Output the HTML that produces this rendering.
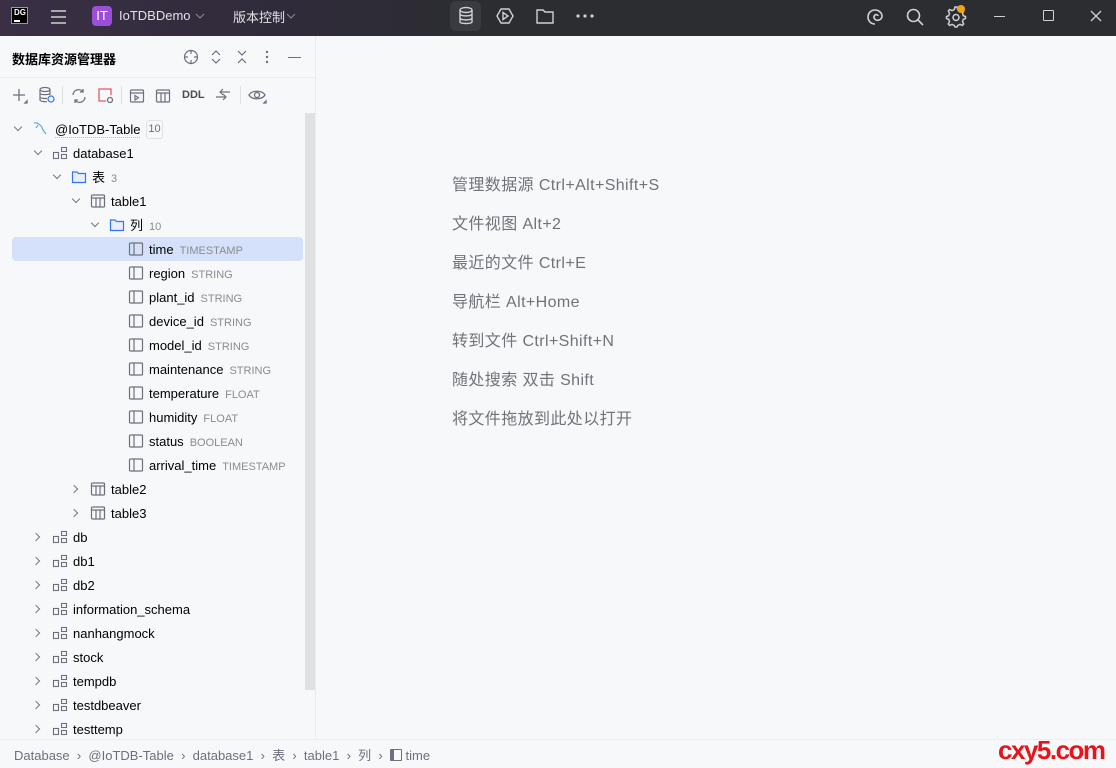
<!DOCTYPE html>
<html><head><meta charset="utf-8"><style>
*{margin:0;padding:0;box-sizing:border-box}
body{width:1116px;height:768px;overflow:hidden;background:#f7f8fa;font-family:"Liberation Sans","Noto Sans CJK SC",sans-serif;position:relative;color:#000}
.top{position:absolute;left:0;top:0;width:1116px;height:36px;background:linear-gradient(90deg,#3a2f45 0%,#302b3a 25%,#2b2d30 45%,#2b2d30 100%)}
.a{position:absolute}
.side{position:absolute;left:0;top:36px;width:316px;height:703px;background:#f7f8fa;border-right:1px solid #ebecf0}
.row{position:absolute;height:24px;line-height:24px;font-size:13px;color:#000;white-space:nowrap}
.row .t{color:#8c8c8c;font-size:11px;margin-left:6px}
.chev{position:absolute;width:6px;height:6px;border-right:1.3px solid #7a7a7a;border-bottom:1.3px solid #7a7a7a}
.down{transform:rotate(45deg)}
.right{transform:rotate(-45deg)}
.hint{position:absolute;left:452px;font-size:16px;color:#6f737a;letter-spacing:0.4px}
svg{position:absolute}
.bc{position:absolute;top:745px;font-size:13px;color:#6c707e}
</style></head><body>
<div class="top"></div>
<div class="a" style="left:11px;top:7px;width:17px;height:17px;background:#000;border:1px solid #21d789;color:#fff;font-size:8px;font-weight:bold;line-height:9px;padding-left:2px">DG<div style="width:6px;height:1.5px;background:#fff;margin-top:3px"></div></div>
<svg style="left:50px;top:9px" width="17" height="16"><path d="M1 2H16M1 8H16M1 14H16" stroke="#ced0d6" stroke-width="1.6"/></svg>
<div class="a" style="left:92px;top:6px;width:20px;height:20px;border-radius:4px;background:#9b4fd9;color:#fff;font-size:13px;line-height:20px;text-align:center">IT</div>
<div class="a" style="left:119px;top:8px;color:#dfe1e5;font-size:13px">IoTDBDemo</div>
<svg style="left:195px;top:13px" width="10" height="6"><path d="M1 1L5 5L9 1" stroke="#8a8d93" fill="none"/></svg>
<div class="a" style="left:233px;top:7px;color:#dfe1e5;font-size:13px">版本控制</div>
<svg style="left:286px;top:13px" width="10" height="6"><path d="M1 1L5 5L9 1" stroke="#8a8d93" fill="none"/></svg>
<div class="a" style="left:450px;top:1px;width:31px;height:30px;border-radius:6px;background:#393b40"></div>
<svg style="left:456px;top:6px" width="20" height="20" fill="none" stroke="#ced0d6" stroke-width="1.4"><ellipse cx="10" cy="4" rx="6" ry="2.5"/><path d="M4 4V16C4 18 16 18 16 16V4M4 8C4 10.5 16 10.5 16 8M4 12C4 14.5 16 14.5 16 12"/></svg>
<svg style="left:495px;top:6px" width="20" height="20" fill="none" stroke="#ced0d6" stroke-width="1.4"><path d="M6 3H14L18 10L14 17H6L2 10Z"/><path d="M8 6.5L13 10L8 13.5Z"/></svg>
<svg style="left:535px;top:7px" width="20" height="18" fill="none" stroke="#ced0d6" stroke-width="1.4"><path d="M2 3H8L10 5H18V16H2Z"/></svg>
<svg style="left:576px;top:14px" width="18" height="4" fill="#ced0d6"><circle cx="2" cy="2" r="1.6"/><circle cx="9" cy="2" r="1.6"/><circle cx="16" cy="2" r="1.6"/></svg>
<svg style="left:865px;top:7px" width="20" height="20" fill="none" stroke="#ced0d6" stroke-width="1.6"><path d="M10 17C5 17 3 13 3 10C3 6 6 3 10 3C14 3 17 6 17 9C17 12 14 14 11 13C9 12 8 10 10 8C11 7 13 8 13 9"/></svg>
<svg style="left:905px;top:7px" width="20" height="20" fill="none" stroke="#ced0d6" stroke-width="1.6"><circle cx="8.5" cy="8.5" r="6"/><path d="M13 13L18 18"/></svg>
<svg style="left:945px;top:6px" width="22" height="22" fill="none" stroke="#ced0d6" stroke-width="1.5"><path d="M10 2L12 2L12.7 4.5L15 5.7L17.3 4.5L18.7 6L17.5 8.3L18.3 10.7L20.5 11.5V13.5L18.3 14.3L17.5 16.7L18.7 19L17.3 20.5L15 19.3L12.7 20.5L12 22H10L9.3 20.5L7 19.3L4.7 20.5L3.3 19L4.5 16.7L3.7 14.3L1.5 13.5V11.5L3.7 10.7L4.5 8.3L3.3 6L4.7 4.5L7 5.7L9.3 4.5Z" transform="translate(0,-1)"/><circle cx="11" cy="11.5" r="3"/></svg>
<div class="a" style="left:957px;top:5px;width:8px;height:8px;border-radius:50%;background:#f2a218"></div>
<div class="a" style="left:994px;top:16px;width:11px;height:1.3px;background:#ced0d6"></div>
<div class="a" style="left:1043px;top:10px;width:11px;height:11px;border:1.3px solid #ced0d6;border-radius:1px"></div>
<svg style="left:1090px;top:10px" width="12" height="12"><path d="M1 1L11 11M11 1L1 11" stroke="#ced0d6" stroke-width="1.3"/></svg>

<div class="side"></div>
<div class="a" style="left:0;top:77px;width:316px;height:1px;background:#ebecf0"></div>
<div class="a" style="left:12px;top:49px;font-size:13px;font-weight:bold;color:#000">数据库资源管理器</div>
<svg style="left:183px;top:49px" width="16" height="16" fill="none" stroke="#6c707e" stroke-width="1.2"><circle cx="8" cy="8" r="6.5"/><path d="M8 1V5M8 11V15M1 8H5M11 8H15"/></svg>
<svg style="left:210px;top:49px" width="12" height="16" fill="none" stroke="#6c707e" stroke-width="1.2"><path d="M2 6L6 2L10 6M2 10L6 14L10 10"/></svg>
<svg style="left:236px;top:49px" width="12" height="16" fill="none" stroke="#6c707e" stroke-width="1.2"><path d="M2 2L6 6L10 2M2 14L6 10L10 14"/></svg>
<svg style="left:265px;top:50px" width="4" height="14" fill="#6c707e"><circle cx="2" cy="2" r="1.2"/><circle cx="2" cy="7" r="1.2"/><circle cx="2" cy="12" r="1.2"/></svg>
<div class="a" style="left:288px;top:57px;width:13px;height:1.2px;background:#6c707e"></div>
<svg style="left:11px;top:87px" width="18" height="18" fill="none" stroke="#6c707e" stroke-width="1.3"><path d="M8 2V14M2 8H14"/><path d="M14 16L16 14V16Z" fill="#6c707e"/></svg>
<svg style="left:38px;top:86px" width="18" height="18" fill="none" stroke="#6c707e" stroke-width="1.2"><ellipse cx="7" cy="3.5" rx="5" ry="2"/><path d="M2 3.5V14C2 15.5 8 16 9 15.5M12 3.5V9M2 7.5C2 9 12 9 12 7.5M2 11C2 12.5 8 12.7 9 12.3"/><circle cx="13" cy="13" r="3" stroke="#3574f0"/></svg>
<div class="a" style="left:62px;top:86px;width:1px;height:18px;background:#dfe1e5"></div>
<svg style="left:70px;top:87px" width="18" height="18" fill="none" stroke="#6c707e" stroke-width="1.3"><path d="M3 8A5.5 5.5 0 0 1 13 5M15 10A5.5 5.5 0 0 1 5 13M13 2V5H10M5 16V13H8"/></svg>
<svg style="left:97px;top:87px" width="18" height="18" fill="none" stroke-width="1.3"><path d="M9 14H2V2H14V8" stroke="#e55765"/><circle cx="13" cy="13" r="2.5" stroke="#6c707e"/></svg>
<div class="a" style="left:121px;top:86px;width:1px;height:18px;background:#dfe1e5"></div>
<svg style="left:129px;top:88px" width="16" height="16" fill="none" stroke="#6c707e" stroke-width="1.2"><rect x="1.5" y="2" width="13" height="12" rx="1"/><path d="M1.5 5H14.5M6 7.5V12L9.5 9.8Z"/></svg>
<svg style="left:155px;top:88px" width="16" height="16" fill="none" stroke="#6c707e" stroke-width="1.2"><rect x="1.5" y="2" width="13" height="12" rx="1"/><path d="M1.5 5H14.5M6 5V14M10 5V14"/></svg>
<div class="a" style="left:182px;top:89px;font-size:11px;font-weight:bold;color:#494b57">DDL</div>
<svg style="left:214px;top:86px" width="18" height="18" fill="none" stroke="#6c707e" stroke-width="1.2"><path d="M2 11H12M9 8L12 11L9 14M16 6H6M9 3L6 6L9 9"/></svg>
<div class="a" style="left:240px;top:86px;width:1px;height:18px;background:#dfe1e5"></div>
<svg style="left:248px;top:87px" width="20" height="18" fill="none" stroke="#6c707e" stroke-width="1.3"><path d="M1 8C4 3 14 3 17 8C14 13 4 13 1 8Z"/><circle cx="9" cy="8" r="2.5"/><path d="M16 16L18 14V16Z" fill="#6c707e"/></svg>
<div class="a" style="left:305px;top:113px;width:10px;height:577px;background:#dfe1e5"></div>
<div class="a" style="left:12px;top:237px;width:291px;height:24px;border-radius:4px;background:#d5e1fb"></div>

<div class="chev down" style="left:15px;top:124px"></div>
<svg style="left:32px;top:120px" width="16" height="16" fill="none" stroke="#4fa3d8" stroke-width="1.1"><path d="M2 3C6 2 10 6 11 10L14 14M6 5L4 8"/></svg>
<div class="row" style="left:55px;top:118px"><span style="border-bottom:1px dotted #e5c33a">@IoTDB-Table</span></div>
<div class="a" style="left:146px;top:120px;width:17px;height:19px;border:1px solid #dfe1e5;border-radius:3px;font-size:11px;color:#6c707e;text-align:center;line-height:17px">10</div>

<div class="chev down" style="left:35px;top:148px"></div>
<svg style="left:52px;top:145px" width="16" height="16" fill="none" stroke="#6c707e" stroke-width="1.1"><rect x="1.5" y="7.5" width="5" height="6"/><rect x="9.5" y="2.5" width="5" height="4"/><rect x="9.5" y="9.5" width="5" height="4"/></svg>
<div class="row" style="left:73px;top:142px">database1</div>

<div class="chev down" style="left:54px;top:172px"></div>
<svg style="left:71px;top:169px" width="16" height="16" fill="none" stroke="#3574f0" stroke-width="1.2"><path d="M1.5 3H6L7.5 4.5H14.5V13.5H1.5Z" fill="#e7effd"/></svg>
<div class="row" style="left:92px;top:166px">表<span class="t">3</span></div>

<div class="chev down" style="left:73px;top:196px"></div>
<svg style="left:90px;top:193px" width="16" height="16" fill="none" stroke="#6c707e" stroke-width="1.2"><rect x="1.5" y="2" width="13" height="12" rx="1"/><path d="M1.5 5H14.5M6 5V14M10 5V14"/></svg>
<div class="row" style="left:111px;top:190px">table1</div>

<div class="chev down" style="left:92px;top:220px"></div>
<svg style="left:109px;top:217px" width="16" height="16" fill="none" stroke="#3574f0" stroke-width="1.2"><path d="M1.5 3H6L7.5 4.5H14.5V13.5H1.5Z" fill="#e7effd"/></svg>
<div class="row" style="left:130px;top:214px">列<span class="t">10</span></div>

<div id="cols"></div>
<script>
var cols=[["time","TIMESTAMP"],["region","STRING"],["plant_id","STRING"],["device_id","STRING"],["model_id","STRING"],["maintenance","STRING"],["temperature","FLOAT"],["humidity","FLOAT"],["status","BOOLEAN"],["arrival_time","TIMESTAMP"]];
var h="";
cols.forEach(function(c,i){var y=237+i*24;
h+='<svg style="left:128px;top:'+(y+4)+'px" width="16" height="16" fill="none" stroke="#6c707e" stroke-width="1.2"><rect x="1.5" y="2" width="13" height="12" rx="1"/><path d="M6 2V14"/></svg>';
h+='<div class="row" style="left:149px;top:'+(y+1)+'px">'+c[0]+'<span class="t">'+c[1]+'</span></div>';});
[["table2",477],["table3",501]].forEach(function(t){
h+='<div class="chev right" style="left:71px;top:'+(t[1]+9)+'px"></div>';
h+='<svg style="left:90px;top:'+(t[1]+4)+'px" width="16" height="16" fill="none" stroke="#6c707e" stroke-width="1.2"><rect x="1.5" y="2" width="13" height="12" rx="1"/><path d="M1.5 5H14.5M6 5V14M10 5V14"/></svg>';
h+='<div class="row" style="left:111px;top:'+(t[1]+1)+'px">'+t[0]+'</div>';});
["db","db1","db2","information_schema","nanhangmock","stock","tempdb","testdbeaver","testtemp"].forEach(function(n,i){var y=525+i*24;
h+='<div class="chev right" style="left:33px;top:'+(y+9)+'px"></div>';
h+='<svg style="left:52px;top:'+(y+4)+'px" width="16" height="16" fill="none" stroke="#6c707e" stroke-width="1.1"><rect x="1.5" y="7.5" width="5" height="6"/><rect x="9.5" y="2.5" width="5" height="4"/><rect x="9.5" y="9.5" width="5" height="4"/></svg>';
h+='<div class="row" style="left:73px;top:'+(y+1)+'px">'+n+'</div>';});
document.getElementById("cols").innerHTML=h;
</script>

<div class="hint" style="top:171px">管理数据源 Ctrl+Alt+Shift+S</div>
<div class="hint" style="top:210px">文件视图 Alt+2</div>
<div class="hint" style="top:249px">最近的文件 Ctrl+E</div>
<div class="hint" style="top:288px">导航栏 Alt+Home</div>
<div class="hint" style="top:327px">转到文件 Ctrl+Shift+N</div>
<div class="hint" style="top:366px">随处搜索 双击 Shift</div>
<div class="hint" style="top:405px">将文件拖放到此处以打开</div>

<div class="a" style="left:0;top:739px;width:1116px;height:1px;background:#ebecf0"></div>
<div class="bc" style="left:14px">Database &nbsp;›&nbsp; @IoTDB-Table &nbsp;›&nbsp; database1 &nbsp;›&nbsp; 表 &nbsp;›&nbsp; table1 &nbsp;›&nbsp; 列 &nbsp;›&nbsp; <span style="display:inline-block;width:12px;height:12px;border:1.2px solid #6c707e;border-radius:1px;vertical-align:-1px;border-left-width:4px"></span> time</div>
<div class="a" style="left:998px;top:735px;font-size:26px;font-weight:bold;color:#e8141b;letter-spacing:-1.5px">cxy5.com</div>
</body></html>
